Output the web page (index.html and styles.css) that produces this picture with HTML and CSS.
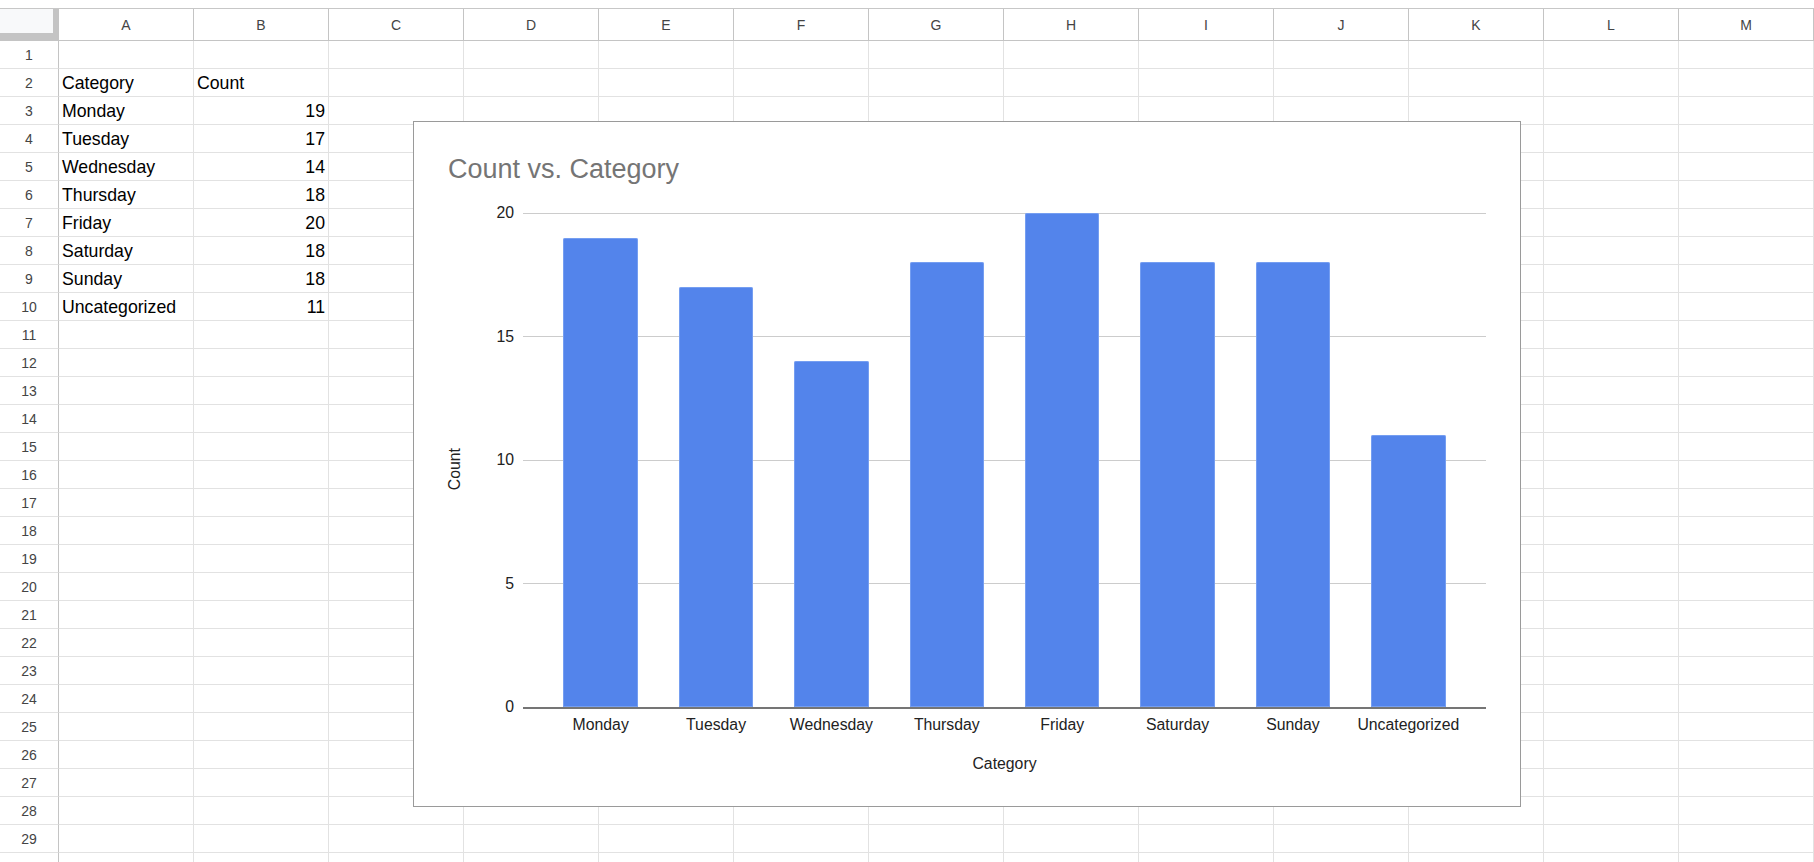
FILE: index.html
```html
<!DOCTYPE html>
<html lang="en">
<head>
<meta charset="UTF-8">
<title>Count vs. Category</title>
<link rel="stylesheet" href="styles.css">
</head>
<body>

<div class="top-edge"></div>

<!-- sheet grid, rows are filled in by the script below -->
<div class="sheet" id="sheet">
    <div class="corner"></div>
    <div class="col-head">A</div>
    <div class="col-head">B</div>
    <div class="col-head">C</div>
    <div class="col-head">D</div>
    <div class="col-head">E</div>
    <div class="col-head">F</div>
    <div class="col-head">G</div>
    <div class="col-head">H</div>
    <div class="col-head">I</div>
    <div class="col-head">J</div>
    <div class="col-head">K</div>
    <div class="col-head">L</div>
    <div class="col-head">M</div>
</div>

<!-- embedded chart, floats over the cells -->
<div class="chart">
    <div class="chart-title">Count vs. Category</div>
    <div class="chart-body">
        <div class="y-title">Count</div>
        <div class="y-labels">
            <span>20</span><span>15</span><span>10</span><span>5</span><span>0</span>
        </div>
        <div class="plot" id="plot"></div>
        <div class="x-labels" id="xLabels"></div>
        <div class="x-title">Category</div>
    </div>
</div>

<script>
/* ===== DATA ===== */
const rows = [
    ["Monday",19],
    ["Tuesday",17],
    ["Wednesday",14],
    ["Thursday",18],
    ["Friday",20],
    ["Saturday",18],
    ["Sunday",18],
    ["Uncategorized",11],
];
const maxValue = 20;

/* ===== SHEET ===== */
const sheet = document.getElementById('sheet');
for(let r=1;r<=30;r++){
    const head = document.createElement('div');
    head.className = 'row-head';
    head.textContent = r;
    sheet.appendChild(head);

    for(let c=0;c<13;c++){
        const cell = document.createElement('div');
        cell.className = 'cell';
        if(r===2 && c===0) cell.textContent = 'Category';
        if(r===2 && c===1) cell.textContent = 'Count';
        const item = rows[r-3];
        if(item && c===0) cell.textContent = item[0];
        if(item && c===1){
            cell.textContent = item[1];
            cell.classList.add('num');
        }
        sheet.appendChild(cell);
    }
}

/* ===== CHART ===== */
const plot = document.getElementById('plot'),
      xLabels = document.getElementById('xLabels');
rows.forEach(([name,value])=>{
    const slot = document.createElement('div');
    slot.className = 'slot';
    const bar = document.createElement('div');
    bar.className = 'bar';
    bar.style.height = (value/maxValue*100)+'%';
    slot.appendChild(bar);
    plot.appendChild(slot);

    const label = document.createElement('span');
    label.textContent = name;
    xLabels.appendChild(label);
});
</script>

</body>
</html>
```

FILE: styles.css
```css
/* =====  PAGE  ===== */
*{box-sizing:border-box;margin:0;padding:0;}
body{
    font-family:"Liberation Sans",Arial,sans-serif;
    background:#fff;
    color:#000;
    width:1814px;
    height:862px;
    overflow:hidden;
}
.top-edge{
    height:9px;
    border-bottom:1px solid #c7c7c7;
}

/* =====  SHEET GRID  ===== */
.sheet{
    display:grid;
    grid-template-columns:59px repeat(13,135px);
    grid-template-rows:32px;
    grid-auto-rows:28px;
}
.corner{
    background:#f8f9fa;
    border-right:6px solid #c4c4c4;
    border-bottom:8px solid #c4c4c4;
}
.col-head{
    display:flex;
    align-items:center;
    justify-content:center;
    font-size:14px;
    color:#444;
    border-right:1px solid #c4c4c4;
    border-bottom:1px solid #c4c4c4;
}
.row-head{
    display:flex;
    align-items:center;
    justify-content:center;
    font-size:14px;
    color:#444;
    border-right:1px solid #c4c4c4;
    border-bottom:1px solid #e2e2e2;
}
.cell{
    padding:1px 3px 0;
    font-size:17.7px;
    line-height:26px;
    white-space:nowrap;
    border-right:1px solid #e2e2e2;
    border-bottom:1px solid #e2e2e2;
}
.cell.num{text-align:right;}

/* =====  CHART  ===== */
.chart{
    position:absolute;
    left:413px;
    top:121px;
    width:1108px;
    height:686px;
    padding-top:32px;
    background:#fff;
    border:1px solid #9a9a9a;
}
.chart-title{
    padding-left:34px;
    font-size:27px;
    line-height:30px;
    color:#757575;
    margin-bottom:29px;
}
.chart-body{
    display:grid;
    grid-template-columns:56px 53px 963px;
    grid-template-rows:auto auto auto;
    font-size:15.8px;
    line-height:18px;
    color:#222;
}
.y-title{
    grid-row:1;
    grid-column:1;
    align-self:center;
    justify-self:end;
    margin:16px 6px 0 0;
    writing-mode:vertical-rl;
    transform:rotate(180deg);
}
/* labels hang 9px past the plot so each one centres on its grid line */
.y-labels{
    grid-row:1;
    grid-column:2;
    align-self:start;
    height:512px;
    margin:-9px 0 -7px;
    padding-right:9px;
    display:flex;
    flex-direction:column;
    justify-content:space-between;
    align-items:flex-end;
}
.plot{
    grid-row:1;
    grid-column:3;
    height:496px;
    padding:0 20px;
    display:flex;
    border-bottom:2px solid #757575;
    background:repeating-linear-gradient(to bottom,#cccccc 0 1px,transparent 1px 123.5px);
}
.slot{
    flex:1;
    display:flex;
    justify-content:center;
    align-items:flex-end;
}
.bar{
    width:74.5px;
    background:#5384eb;
    border-radius:2px 2px 0 0;
    box-shadow:inset 0 0 0 1px rgba(140,175,245,.6);
}
.x-labels{
    grid-row:2;
    grid-column:3;
    margin-top:6.5px;
    padding:0 20px;
    display:flex;
}
.x-labels span{
    flex:1;
    text-align:center;
    white-space:nowrap;
}
.x-title{
    grid-row:3;
    grid-column:3;
    margin-top:21px;
    text-align:center;
}
```
